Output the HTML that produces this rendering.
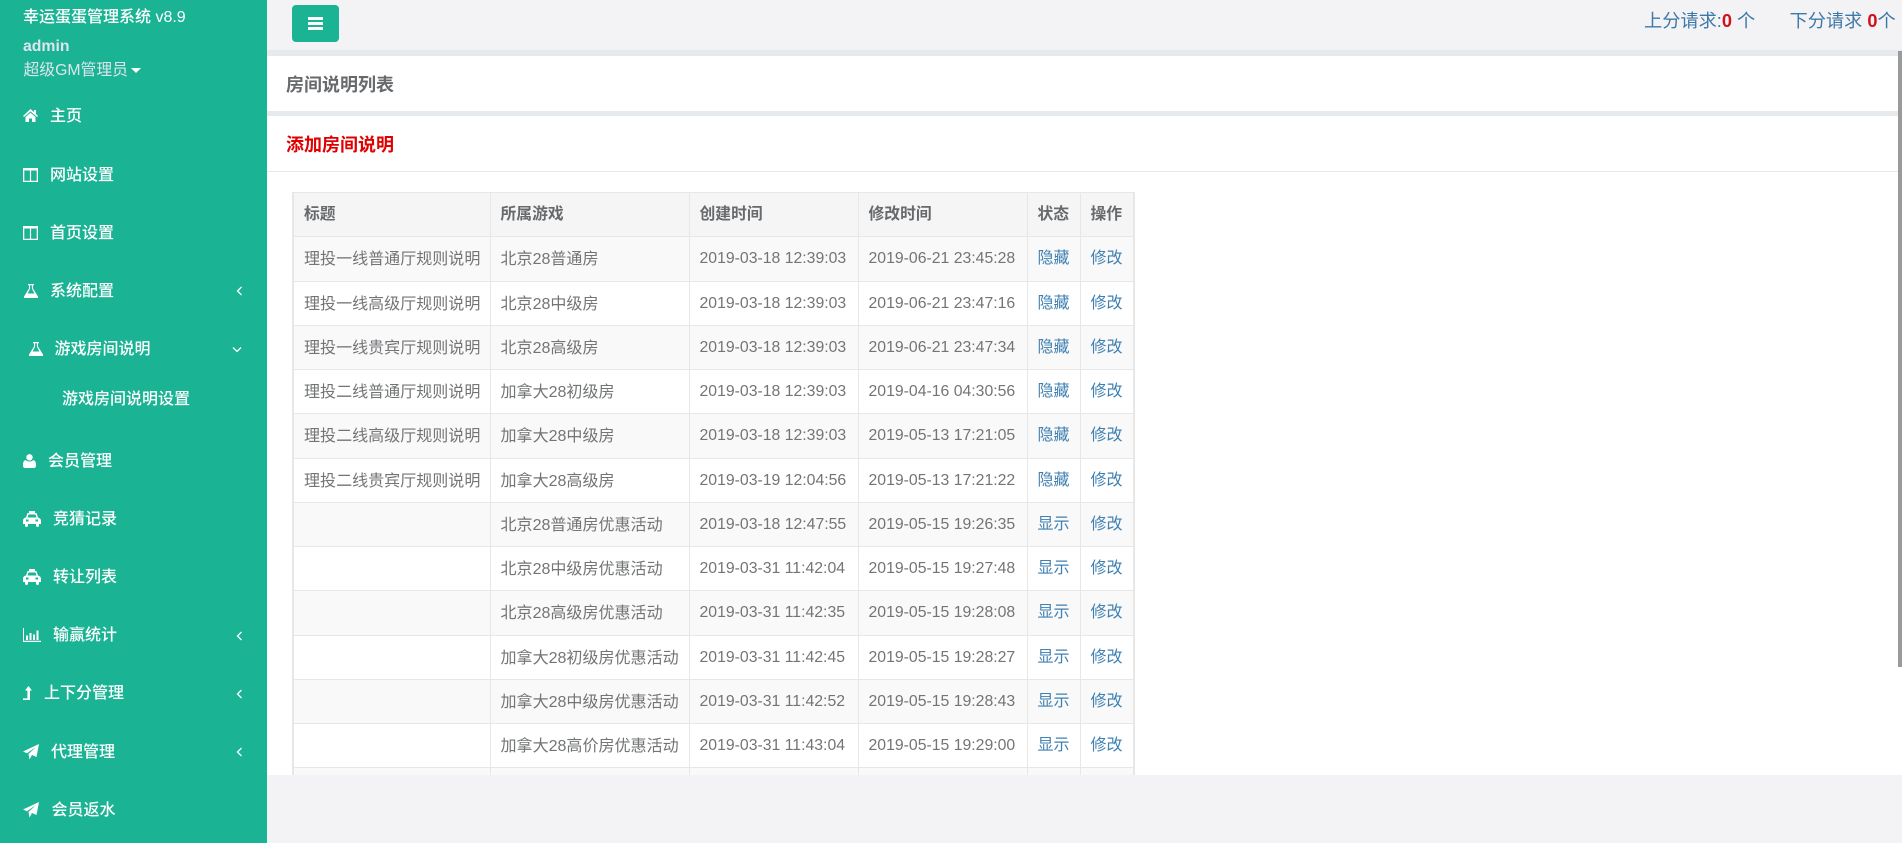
<!DOCTYPE html>
<html lang="zh"><head><meta charset="utf-8"><title>房间说明列表</title>
<style>
html,body{margin:0;padding:0;width:1902px;height:843px;overflow:hidden;background:#f3f3f5;font-family:"Liberation Sans","Noto Sans CJK SC",sans-serif;color:#676a6c}
*{box-sizing:border-box}
.a{position:absolute;white-space:nowrap}
#side{position:absolute;left:0;top:0;width:267px;height:843px;background:#1ab394;color:#fff;overflow:hidden}
#side .t{position:absolute;white-space:nowrap;font-size:16px;line-height:20px;font-weight:500;color:#fff}
#side svg{position:absolute;fill:#fff}
.ch{fill:none!important;stroke:#fff;stroke-width:1.3}
#main{position:absolute;left:267px;top:50px;width:1635px;height:725px;background:#fff;overflow:hidden}
table{position:absolute;left:25px;top:142px;border-collapse:collapse;table-layout:fixed;width:841px;font-size:15.8px;border-left:2px solid #e7e7e7;border-right:2px solid #e7e7e7;border-top:1px solid #e7e7e7}
td,th{border:1px solid #e7e7e7;padding:1px 0 0 10px;height:44.25px;text-align:left;white-space:nowrap;overflow:hidden;vertical-align:middle;line-height:20px}
th{background:#f5f5f6;font-weight:700}
tbody tr:nth-child(odd) td{background:#f9f9f9}
td{font-weight:400;color:#727476}
td:nth-child(1),td:nth-child(2){font-size:16.05px}
td a{color:#3f80b2;text-decoration:none;font-size:16px}
</style></head><body>
<div id="side">
<div class="t" style="left:23px;top:8px;font-size:16px;color:#fff;font-weight:500">幸运蛋蛋管理系统 v8.9</div>
<div class="t" style="left:23px;top:37px;font-size:15.8px;font-weight:700;color:#dfe4ed">admin</div>
<div class="t" style="left:23.500px;top:61px;font-size:15.8px;font-weight:400;color:#dfe4ed">超级GM管理员</div>
<svg style="left:131px;top:68px" width="10" height="6" viewBox="0 0 10 6"><path d="M0 0h10L5 5z"/></svg>

<svg style="left:23px;top:109px" width="15" height="13" viewBox="0 0 15 13"><path d="M7.500 0 11 3V1h2v4l2 2-1 1-6.500-5.500L1 8 0 7zM2.500 8l5-4.200 5 4.200v5H9V9.500H6V13H2.500z"/></svg>
<div class="t" style="left:50px;top:107px">主页</div>

<svg style="left:23px;top:168px" width="15" height="14" viewBox="0 0 15 14"><path d="M0 0h15v14H0zM1.300 2.500v10.200h5.600V2.500zM8.100 2.500v10.200h5.600V2.500z" fill-rule="evenodd"/></svg>
<div class="t" style="left:50px;top:166px">网站设置</div>

<svg style="left:23px;top:226px" width="15" height="14" viewBox="0 0 15 14"><path d="M0 0h15v14H0zM1.300 2.500v10.200h5.600V2.500zM8.100 2.500v10.200h5.600V2.500z" fill-rule="evenodd"/></svg>
<div class="t" style="left:50px;top:224px">首页设置</div>

<svg style="left:24px;top:284px" width="14" height="14" viewBox="0 0 14 14"><path fill-rule="evenodd" d="M4 0h6v1.200H9v3.300l5 8V14H0v-1.500l5-8V1.200H4zM6.100 1.200v3.600L3.600 9.500h6.800L7.900 4.800V1.200z"/></svg>
<div class="t" style="left:50px;top:282px">系统配置</div>
<svg style="left:236px;top:286px" width="7" height="10" viewBox="0 0 7 10"><path class="ch" d="M5.500 1 1.500 5l4 4"/></svg>

<svg style="left:29px;top:342px" width="14" height="14" viewBox="0 0 14 14"><path fill-rule="evenodd" d="M4 0h6v1.200H9v3.300l5 8V14H0v-1.500l5-8V1.200H4zM6.100 1.200v3.600L3.600 9.500h6.800L7.900 4.800V1.200z"/></svg>
<div class="t" style="left:54.500px;top:340px">游戏房间说明</div>
<svg style="left:232px;top:346px" width="10" height="7" viewBox="0 0 10 7"><path class="ch" d="M1 1.500 5 5.500l4-4"/></svg>

<div class="t" style="left:62px;top:390px">游戏房间说明设置</div>

<svg style="left:23px;top:454px" width="13" height="14" viewBox="0 0 13 14"><circle cx="6.500" cy="3.300" r="3.200"/><path d="M2.500 6C1 6.500 0 8 0 10.500V12c0 1 .8 2 2 2h9c1.200 0 2-1 2-2v-1.500C13 8 12 6.500 10.500 6 9.500 7 8 7.500 6.500 7.500S3.500 7 2.500 6z"/></svg>
<div class="t" style="left:48px;top:452px">会员管理</div>

<svg style="left:23px;top:511px" width="18" height="16" viewBox="0 0 18 16"><path d="M6 0h6v2h1.500l1.500 4.500c1.500.5 3 1.500 3 3V13h-2v1.500c0 2-3 2-3 0V13H5v1.500c0 2-3 2-3 0V13H0V9.500c0-1.500 1.500-3 3-3L4.500 2H6zM5.500 3.500l-1 3h9l-1-3z M3 8.500v2h2.500v-2zM12.500 8.500v2H15v-2z" fill-rule="evenodd"/></svg>
<div class="t" style="left:53px;top:510px">竞猜记录</div>

<svg style="left:23px;top:569px" width="18" height="16" viewBox="0 0 18 16"><path d="M6 0h6v2h1.500l1.500 4.500c1.500.5 3 1.500 3 3V13h-2v1.500c0 2-3 2-3 0V13H5v1.500c0 2-3 2-3 0V13H0V9.500c0-1.500 1.500-3 3-3L4.500 2H6zM5.500 3.500l-1 3h9l-1-3z M3 8.500v2h2.500v-2zM12.500 8.500v2H15v-2z" fill-rule="evenodd"/></svg>
<div class="t" style="left:53px;top:568px">转让列表</div>

<svg style="left:23px;top:628px" width="18" height="14" viewBox="0 0 18 14"><path d="M0 0h1v12.800h17V14H0z"/><path d="M3 7.500h2V12H3zM6.500 5h2v7h-2zM10 6.500h2V12h-2zM13.500 2.500h2V12h-2z"/></svg>
<div class="t" style="left:53px;top:626px">输赢统计</div>
<svg style="left:236px;top:631px" width="7" height="10" viewBox="0 0 7 10"><path class="ch" d="M5.500 1 1.500 5l4 4"/></svg>

<svg style="left:23px;top:686px" width="9" height="14" viewBox="0 0 9 14"><path d="M5.500 0 9 4.500H7V14H0v-1.600h4.400V4.500H2z"/></svg>
<div class="t" style="left:44px;top:684px">上下分管理</div>
<svg style="left:236px;top:689px" width="7" height="10" viewBox="0 0 7 10"><path class="ch" d="M5.500 1 1.500 5l4 4"/></svg>

<svg style="left:23px;top:744px" width="16" height="16" viewBox="0 0 16 16"><path d="M16 0 13.500 13 9 11l-2.500 4.500L5.500 10 13 3 4 9.300 0 7.500z"/></svg>
<div class="t" style="left:51px;top:743px">代理管理</div>
<svg style="left:236px;top:747px" width="7" height="10" viewBox="0 0 7 10"><path class="ch" d="M5.500 1 1.500 5l4 4"/></svg>

<svg style="left:23px;top:802px" width="16" height="16" viewBox="0 0 16 16"><path d="M16 0 13.500 13 9 11l-2.500 4.500L5.500 10 13 3 4 9.300 0 7.500z"/></svg>
<div class="t" style="left:51.500px;top:801px">会员返水</div>
</div>

<div class="a" style="left:292px;top:5px;width:47px;height:37px;background:#1ab394;border-radius:4px"></div>
<div class="a" style="left:308px;top:17px;width:15px;height:3px;background:#fff"></div>
<div class="a" style="left:308px;top:22px;width:15px;height:3px;background:#fff"></div>
<div class="a" style="left:308px;top:27px;width:15px;height:3px;background:#fff"></div>

<div class="a" style="left:1644px;top:10px;font-size:18.2px;line-height:22px;color:#3d79a8">上分请求:<b style="color:#d0111b">0</b> 个</div>
<div class="a" style="left:1789.500px;top:10px;font-size:18.2px;line-height:22px;color:#3d79a8">下分请求 <b style="color:#d0111b">0</b>个</div>

<div id="main">
<div class="a" style="left:0;top:0;width:1635px;height:6px;background:#e7eaec"></div>
<div class="a" style="left:19px;top:23px;font-size:18px;line-height:24px;font-weight:700;color:#676a6c">房间说明列表</div>
<div class="a" style="left:0;top:61px;width:1635px;height:5px;background:#e7eaec"></div>
<div class="a" style="left:19px;top:83px;font-size:18px;line-height:24px;font-weight:700;color:#e00000">添加房间说明</div>
<div class="a" style="left:0;top:121px;width:1635px;height:1px;background:#e7eaec"></div>

<table>
<colgroup><col style="width:197px"><col style="width:199px"><col style="width:169px"><col style="width:169px"><col style="width:53px"><col style="width:54px"></colgroup>
<thead><tr><th>标题</th><th>所属游戏</th><th>创建时间</th><th>修改时间</th><th>状态</th><th>操作</th></tr></thead>
<tbody>
<tr><td>理投一线普通厅规则说明</td><td>北京28普通房</td><td>2019-03-18 12:39:03</td><td>2019-06-21 23:45:28</td><td><a>隐藏</a></td><td><a>修改</a></td></tr>
<tr><td>理投一线高级厅规则说明</td><td>北京28中级房</td><td>2019-03-18 12:39:03</td><td>2019-06-21 23:47:16</td><td><a>隐藏</a></td><td><a>修改</a></td></tr>
<tr><td>理投一线贵宾厅规则说明</td><td>北京28高级房</td><td>2019-03-18 12:39:03</td><td>2019-06-21 23:47:34</td><td><a>隐藏</a></td><td><a>修改</a></td></tr>
<tr><td>理投二线普通厅规则说明</td><td>加拿大28初级房</td><td>2019-03-18 12:39:03</td><td>2019-04-16 04:30:56</td><td><a>隐藏</a></td><td><a>修改</a></td></tr>
<tr><td>理投二线高级厅规则说明</td><td>加拿大28中级房</td><td>2019-03-18 12:39:03</td><td>2019-05-13 17:21:05</td><td><a>隐藏</a></td><td><a>修改</a></td></tr>
<tr><td>理投二线贵宾厅规则说明</td><td>加拿大28高级房</td><td>2019-03-19 12:04:56</td><td>2019-05-13 17:21:22</td><td><a>隐藏</a></td><td><a>修改</a></td></tr>
<tr><td></td><td>北京28普通房优惠活动</td><td>2019-03-18 12:47:55</td><td>2019-05-15 19:26:35</td><td><a>显示</a></td><td><a>修改</a></td></tr>
<tr><td></td><td>北京28中级房优惠活动</td><td>2019-03-31 11:42:04</td><td>2019-05-15 19:27:48</td><td><a>显示</a></td><td><a>修改</a></td></tr>
<tr><td></td><td>北京28高级房优惠活动</td><td>2019-03-31 11:42:35</td><td>2019-05-15 19:28:08</td><td><a>显示</a></td><td><a>修改</a></td></tr>
<tr><td></td><td>加拿大28初级房优惠活动</td><td>2019-03-31 11:42:45</td><td>2019-05-15 19:28:27</td><td><a>显示</a></td><td><a>修改</a></td></tr>
<tr><td></td><td>加拿大28中级房优惠活动</td><td>2019-03-31 11:42:52</td><td>2019-05-15 19:28:43</td><td><a>显示</a></td><td><a>修改</a></td></tr>
<tr><td></td><td>加拿大28高价房优惠活动</td><td>2019-03-31 11:43:04</td><td>2019-05-15 19:29:00</td><td><a>显示</a></td><td><a>修改</a></td></tr>
<tr><td></td><td></td><td></td><td></td><td></td><td></td></tr>
</tbody></table>
<div class="a" style="left:1631px;top:1px;width:4px;height:616px;background:#9a9a9a"></div>
</div>
</body></html>
